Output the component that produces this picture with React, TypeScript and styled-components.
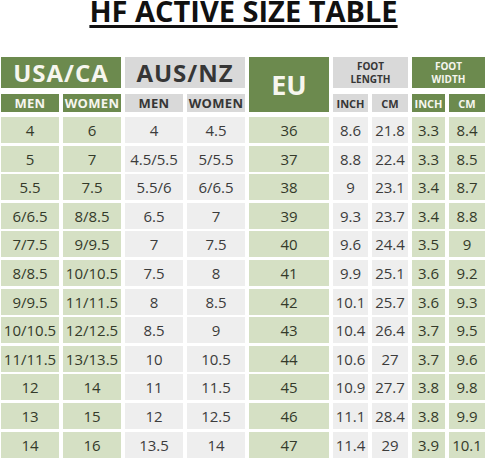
import styled, { createGlobalStyle } from "styled-components";

const GlobalStyle = createGlobalStyle`
  body {
    margin: 0;
    background: #ffffff;
    font-family: "Open Sans", "Liberation Sans", sans-serif;
  }
`

const COLUMNS = "58px 58px 58px 58px 80px 35px 36px 33px 36px";

const Page = styled.div`
  width: 488px;
  height: 461px;
  padding: 0 0 0 1px;
  box-sizing: border-box;
  overflow: hidden;
`
const Title = styled.h1`
  margin: -4px 0 0 0;
  padding-right: 2px;
  text-align: center;
  font-size: 29px;
  line-height: 29px;
  font-weight: 700;
  color: #111;
  text-decoration: underline;
  text-decoration-thickness: 2.5px;
  text-underline-offset: 3px;
`
const Head = styled.div`
  margin-top: 32px;
  display: grid;
  grid-template-columns: ${COLUMNS};
  grid-template-rows: 31px 18px;
  column-gap: 4px;
  row-gap: 6px;
`
const Body = styled.div`
  margin-top: 5px;
  display: grid;
  grid-template-columns: ${COLUMNS};
  grid-auto-rows: 26px;
  column-gap: 4px;
  row-gap: 2.6px;
`

type Tone = "green" | "gray";

const HeadCell = styled.div<{ $tone: Tone; $size: number; $span?: number; $rows?: number; $spacing?: number }>`
  grid-column: span ${(p) => p.$span ?? 1};
  grid-row: span ${(p) => p.$rows ?? 1};
  display: flex;
  align-items: center;
  justify-content: center;
  text-align: center;
  background: ${(p) => (p.$tone === "green" ? "#6c8a4e" : "#d9d9d9")};
  color: ${(p) => (p.$tone === "green" ? "#f6f6ee" : "#363636")};
  font-size: ${(p) => p.$size}px;
  letter-spacing: ${(p) => p.$spacing ?? 0}px;
  font-weight: 700;
  line-height: 13px;
`
const Cell = styled.div<{ $tone: Tone }>`
  display: flex;
  align-items: center;
  justify-content: center;
  background: ${(p) => (p.$tone === "green" ? "#d5e0c4" : "#eeeeee")};
  color: ${(p) => (p.$tone === "green" ? "#343a2a" : "#3c3c3c")};
  font-size: 15px;
  font-weight: 500;
`

const tones: Tone[] = ["green", "green", "gray", "gray", "green", "gray", "gray", "green", "green"];

const rows = [
  ["4", "6", "4", "4.5", "36", "8.6", "21.8", "3.3", "8.4"],
  ["5", "7", "4.5/5.5", "5/5.5", "37", "8.8", "22.4", "3.3", "8.5"],
  ["5.5", "7.5", "5.5/6", "6/6.5", "38", "9", "23.1", "3.4", "8.7"],
  ["6/6.5", "8/8.5", "6.5", "7", "39", "9.3", "23.7", "3.4", "8.8"],
  ["7/7.5", "9/9.5", "7", "7.5", "40", "9.6", "24.4", "3.5", "9"],
  ["8/8.5", "10/10.5", "7.5", "8", "41", "9.9", "25.1", "3.6", "9.2"],
  ["9/9.5", "11/11.5", "8", "8.5", "42", "10.1", "25.7", "3.6", "9.3"],
  ["10/10.5", "12/12.5", "8.5", "9", "43", "10.4", "26.4", "3.7", "9.5"],
  ["11/11.5", "13/13.5", "10", "10.5", "44", "10.6", "27", "3.7", "9.6"],
  ["12", "14", "11", "11.5", "45", "10.9", "27.7", "3.8", "9.8"],
  ["13", "15", "12", "12.5", "46", "11.1", "28.4", "3.8", "9.9"],
  ["14", "16", "13.5", "14", "47", "11.4", "29", "3.9", "10.1"],
];

export default function App() {
  return (
    <Page>
      <GlobalStyle />
      <Title>HF ACTIVE SIZE TABLE</Title>
      <Head>
        <HeadCell $tone="green" $size={24} $spacing={1} $span={2}>USA/CA</HeadCell>
        <HeadCell $tone="gray" $size={24} $spacing={1} $span={2}>AUS/NZ</HeadCell>
        <HeadCell $tone="green" $size={27} $rows={2}>EU</HeadCell>
        <HeadCell $tone="gray" $size={10} $span={2}>FOOT<br />LENGTH</HeadCell>
        <HeadCell $tone="green" $size={10} $span={2}>FOOT<br />WIDTH</HeadCell>

        <HeadCell $tone="green" $size={13} $spacing={0.3}>MEN</HeadCell>
        <HeadCell $tone="green" $size={13} $spacing={0.3}>WOMEN</HeadCell>
        <HeadCell $tone="gray" $size={13} $spacing={0.3}>MEN</HeadCell>
        <HeadCell $tone="gray" $size={13} $spacing={0.3}>WOMEN</HeadCell>
        <HeadCell $tone="gray" $size={11}>INCH</HeadCell>
        <HeadCell $tone="gray" $size={11}>CM</HeadCell>
        <HeadCell $tone="green" $size={11}>INCH</HeadCell>
        <HeadCell $tone="green" $size={11}>CM</HeadCell>
      </Head>
      <Body>
        {rows.map((row, r) =>
          row.map((value, c) => (
            <Cell key={`${r}-${c}`} $tone={tones[c]}>{value}</Cell>
          ))
        )}
      </Body>
    </Page>
  );
}
